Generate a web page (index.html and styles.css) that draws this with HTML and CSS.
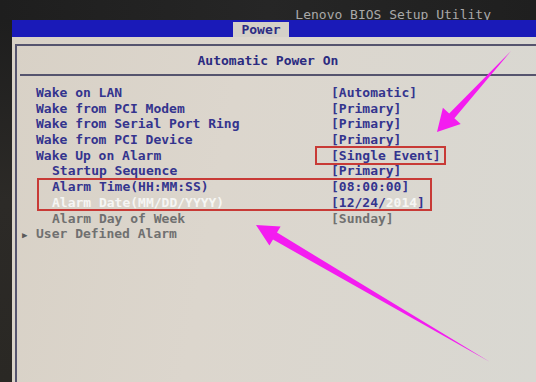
FILE: index.html
```html
<!DOCTYPE html>
<html>
<head>
<meta charset="utf-8">
<link rel="stylesheet" href="styles.css">
</head>
<body>
<div class="screen">
  <div class="top"><span class="brand">Lenovo BIOS Setup Utility</span></div>
  <div class="body">
    <div class="strip"></div>
    <div class="panel">
      <div class="tabs"><div class="tab">Power</div></div>
      <div class="area">
        <div class="frame">
          <div class="title">Automatic Power On</div>
          <div class="list">
            <div class="row"><span class="lbl">Wake on LAN</span><span class="val">[Automatic]</span></div>
            <div class="row"><span class="lbl">Wake from PCI Modem</span><span class="val">[Primary]</span></div>
            <div class="row"><span class="lbl">Wake from Serial Port Ring</span><span class="val">[Primary]</span></div>
            <div class="row"><span class="lbl">Wake from PCI Device</span><span class="val">[Primary]</span></div>
            <div class="row"><span class="lbl">Wake Up on Alarm</span><span class="val">[Single Event]</span></div>
            <div class="row sub"><span class="lbl">Startup Sequence</span><span class="val">[Primary]</span></div>
            <div class="row sub"><span class="lbl">Alarm Time(HH:MM:SS)</span><span class="val">[08:00:00]</span></div>
            <div class="row sub sel"><span class="lbl">Alarm Date(MM/DD/YYYY)</span><span class="val">[12/24/<span class="hi">2014</span>]</span></div>
            <div class="row sub dim"><span class="lbl">Alarm Day of Week</span><span class="val">[Sunday]</span></div>
            <div class="row dim"><span class="lbl"><span class="tri">&#9654;</span>User Defined Alarm</span><span class="val"></span></div>
          </div>
        </div>
      </div>
    </div>
  </div>
  <div class="box box-event"></div>
  <div class="box box-alarm"></div>
  <svg class="arrows" width="536" height="382" viewBox="0 0 536 382">
    <polygon points="437,132 442.9,107.7 449.2,113.4 511,51 454.4,118.2 460.7,123.9" fill="#f41cf0"/>
    <polygon points="256,225 280.6,226.6 277,232.6 490,362 273,239.6 269.4,245.6" fill="#f41cf0"/>
  </svg>
</div>
</body>
</html>
```
FILE: styles.css
```css
* { box-sizing: border-box; }
html, body { margin: 0; padding: 0; background: #1c1c1c; }
.screen {
  position: relative;
  width: 536px;
  height: 382px;
  overflow: hidden;
  display: flex;
  flex-direction: column;
  font-family: "DejaVu Sans Mono", "Liberation Mono", monospace;
  font-weight: bold;
  font-size: 13px;
}
.top {
  height: 20px;
  background: linear-gradient(90deg, #1e1e1e, #262626 50%, #1f1f1f);
  display: flex;
  justify-content: flex-end;
  align-items: center;
  padding-right: 45px;
  padding-top: 8px;
}
.brand { color: #a9a9a9; font-weight: normal; }
.body { flex: 1; display: flex; }
.strip {
  width: 12px;
  background: linear-gradient(180deg, #1e1e1e, #2c2a27 50%, #2a2824);
}
.panel {
  flex: 1;
  display: flex;
  flex-direction: column;
  background: linear-gradient(100deg, #d8d1c6 0%, #dcd6cd 40%, #d9d8d2 100%);
}
.tabs {
  height: 17px;
  background: #1a1ab8;
  padding-left: 221px;
  display: flex;
  align-items: flex-end;
}
.tab {
  width: 56px;
  height: 15px;
  background: #d4d0c8;
  color: #2c2c84;
  text-align: center;
  line-height: 16px;
}
.area { flex: 1; padding: 7px 0 0 3px; display: flex; }
.frame {
  flex: 1;
  border-left: 2px solid #55546e;
  border-top: 2px solid #55546e;
}
.title {
  height: 30px;
  line-height: 30px;
  text-align: center;
  padding-right: 20px;
  color: #2b2b80;
  margin-left: 3px;
  border-bottom: 2px solid #55546e;
}
.list { padding-top: 9px; }
.row {
  display: grid;
  grid-template-columns: 295px auto;
  height: 15.7px;
  line-height: 15.7px;
  padding-left: 19px;
  color: #34348e;
  white-space: pre;
}
.row.sub .lbl { padding-left: 16px; }
.row.sel .lbl { color: #f6f6f4; }
.row.dim { color: #707070; }
.tri { display: inline-block; width: 0; margin-left: -14px; margin-right: 14px; font-size: 9px; color: #5a5a5a; }
.hi { color: #f6f6f4; }
.box {
  position: absolute;
  border: 2px solid #c83a36;
}
.box-event { left: 315px; top: 146px; width: 131px; height: 19px; }
.box-alarm { left: 37px; top: 178px; width: 395px; height: 33px; }
.arrows { position: absolute; left: 0; top: 0; }
```
